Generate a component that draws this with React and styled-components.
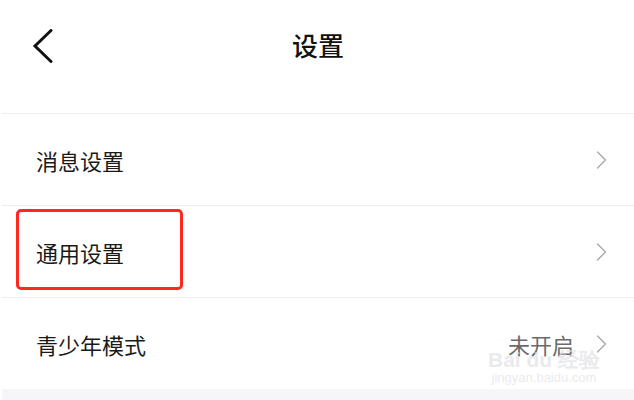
import React from 'react';
import styled, { createGlobalStyle } from 'styled-components';

const GlobalStyle = createGlobalStyle`
  html, body {
    margin: 0;
    padding: 0;
    background: #ffffff;
  }
  body {
    font-family: "Noto Sans CJK SC", "Noto Sans", sans-serif;
    color: #1a1a1a;
  }
`;

const Page = styled.div`
  width: 634px;
  height: 400px;
  overflow: hidden;
  display: flex;
  flex-direction: column;
  background: #ffffff;
`;

const Header = styled.div`
  height: 113px;
  margin-left: 2px;
  border-bottom: 1px solid #eeeeee;
  display: grid;
  grid-template-columns: 80px 1fr 80px;
  align-items: start;
`;

const BackButton = styled.div`
  padding: 29px 0 0 30px;
  display: flex;
`;

const Title = styled.h1`
  margin: 0;
  padding-top: 26px;
  text-align: center;
  font-size: 26px;
  font-weight: 500;
  line-height: 38px;
  color: #111111;
`;

const List = styled.div`
  display: flex;
  flex-direction: column;
`;

const Row = styled.div`
  position: relative;
  height: 91px;
  margin-left: 2px;
  padding: 0 27px 0 34px;
  display: flex;
  align-items: center;
  border-bottom: ${(p) => (p.last ? 'none' : '1px solid #eeeeee')};
`;

const Label = styled.span`
  flex: 1;
  font-size: 22px;
  line-height: 30px;
  color: #1a1a1a;
`;

const Value = styled.span`
  font-size: 22px;
  line-height: 30px;
  color: #6b6b6b;
  margin-right: 22px;
`;

const Highlight = styled.div`
  position: absolute;
  left: 14px;
  top: 3px;
  width: 161px;
  height: 75px;
  border: 3px solid #ff2a1f;
  border-radius: 5px;
  pointer-events: none;
`;

const Footer = styled.div`
  flex: 1;
  margin-left: 2px;
  background: #f6f6f8;
`;

const Watermark = styled.div`
  position: absolute;
  left: 484px;
  top: 51px;
  width: 116px;
  display: flex;
  flex-direction: column;
  align-items: center;
  color: rgba(225, 225, 230, 0.7);
  font-family: "Liberation Sans", sans-serif;
  pointer-events: none;
`;

const WatermarkMain = styled.span`
  font-size: 21px;
  font-weight: 700;
  line-height: 22px;
  white-space: nowrap;
`;

const WatermarkSub = styled.span`
  font-size: 13px;
  line-height: 14px;
  white-space: nowrap;
`;

const Chevron = () => (
  <svg width="11" height="18" viewBox="0 0 11 18" fill="none">
    <polyline points="1.5,1 9.5,9 1.5,17" stroke="#a8a8a8" strokeWidth="1.4" strokeLinecap="round" strokeLinejoin="round" />
  </svg>
);

const BackIcon = () => (
  <svg width="22" height="34" viewBox="0 0 22 34" fill="none">
    <polyline points="19,1.5 3,17 19,32.5" stroke="#111111" strokeWidth="3" strokeLinecap="round" strokeLinejoin="miter" />
  </svg>
);

const items = [
  { label: '消息设置' },
  { label: '通用设置', highlight: true },
  { label: '青少年模式', value: '未开启', watermark: true },
];

export default function App() {
  return (
    <>
      <GlobalStyle />
      <Page>
        <Header>
          <BackButton>
            <BackIcon />
          </BackButton>
          <Title>设置</Title>
          <div />
        </Header>
        <List>
          {items.map((item, i) => (
            <Row key={item.label} last={i === items.length - 1}>
              <Label>{item.label}</Label>
              {item.value && <Value>{item.value}</Value>}
              <Chevron />
              {item.highlight && <Highlight />}
              {item.watermark && (
                <Watermark>
                  <WatermarkMain>Bai du 经验</WatermarkMain>
                  <WatermarkSub>jingyan.baidu.com</WatermarkSub>
                </Watermark>
              )}
            </Row>
          ))}
        </List>
        <Footer />
      </Page>
    </>
  );
}
